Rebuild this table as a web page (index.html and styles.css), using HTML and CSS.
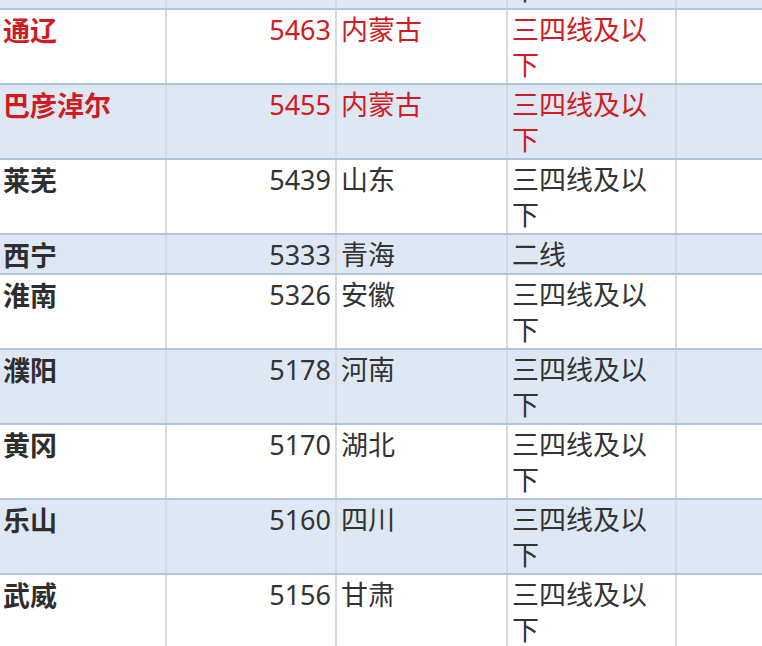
FILE: index.html
```html
<!DOCTYPE html>
<html lang="zh">
<head>
<meta charset="utf-8">
<link rel="stylesheet" href="styles.css">
</head>
<body>
<table class="rank">
  <colgroup>
    <col class="c-name"><col class="c-num"><col class="c-prov"><col class="c-tier"><col class="c-extra">
  </colgroup>
  <tbody>
    <tr class="alt"><td class="name">&nbsp;</td><td class="num">&nbsp;</td><td></td><td>三四线及以下</td><td></td></tr>
    <tr class="hl"><td class="name">通辽</td><td class="num">5463</td><td>内蒙古</td><td>三四线及以下</td><td></td></tr>
    <tr class="alt hl"><td class="name">巴彦淖尔</td><td class="num">5455</td><td>内蒙古</td><td>三四线及以下</td><td></td></tr>
    <tr><td class="name">莱芜</td><td class="num">5439</td><td>山东</td><td>三四线及以下</td><td></td></tr>
    <tr class="alt"><td class="name">西宁</td><td class="num">5333</td><td>青海</td><td>二线</td><td></td></tr>
    <tr><td class="name">淮南</td><td class="num">5326</td><td>安徽</td><td>三四线及以下</td><td></td></tr>
    <tr class="alt"><td class="name">濮阳</td><td class="num">5178</td><td>河南</td><td>三四线及以下</td><td></td></tr>
    <tr><td class="name">黄冈</td><td class="num">5170</td><td>湖北</td><td>三四线及以下</td><td></td></tr>
    <tr class="alt"><td class="name">乐山</td><td class="num">5160</td><td>四川</td><td>三四线及以下</td><td></td></tr>
    <tr><td class="name">武威</td><td class="num">5156</td><td>甘肃</td><td>三四线及以下</td><td></td></tr>
  </tbody>
</table>
</body>
</html>
```
FILE: styles.css
```css
html, body {
  margin: 0;
  padding: 0;
  background: #ffffff;
  overflow: hidden;
}

.rank {
  border-collapse: collapse;
  table-layout: fixed;
  width: 800px;
  margin-top: -65px;
  font-family: "Noto Sans", "Noto Sans CJK SC", sans-serif;
  font-size: 27px;
  line-height: 35px;
  color: #333333;
}

.c-name { width: 166px; }
.c-num { width: 170px; }
.c-prov { width: 171px; }
.c-tier { width: 169px; }
.c-extra { width: 124px; }

.rank td {
  padding: 2px 10px 1px 4px;
  vertical-align: top;
  border-bottom: 2px solid #b0c5db;
  border-left: 2px solid #d6dade;
  background: #ffffff;
  word-break: break-all;
}

.rank td:first-child {
  border-left: none;
  padding-left: 3px;
}

.rank tr.alt td {
  background: #dee8f4;
}

.rank td.name {
  font-weight: bold;
  font-family: "Noto Sans CJK SC", sans-serif;
  color: #2e2e2e;
}

.rank td.num {
  text-align: right;
  padding-right: 4px;
}

.rank tr.hl td {
  color: #d21a22;
}
```
